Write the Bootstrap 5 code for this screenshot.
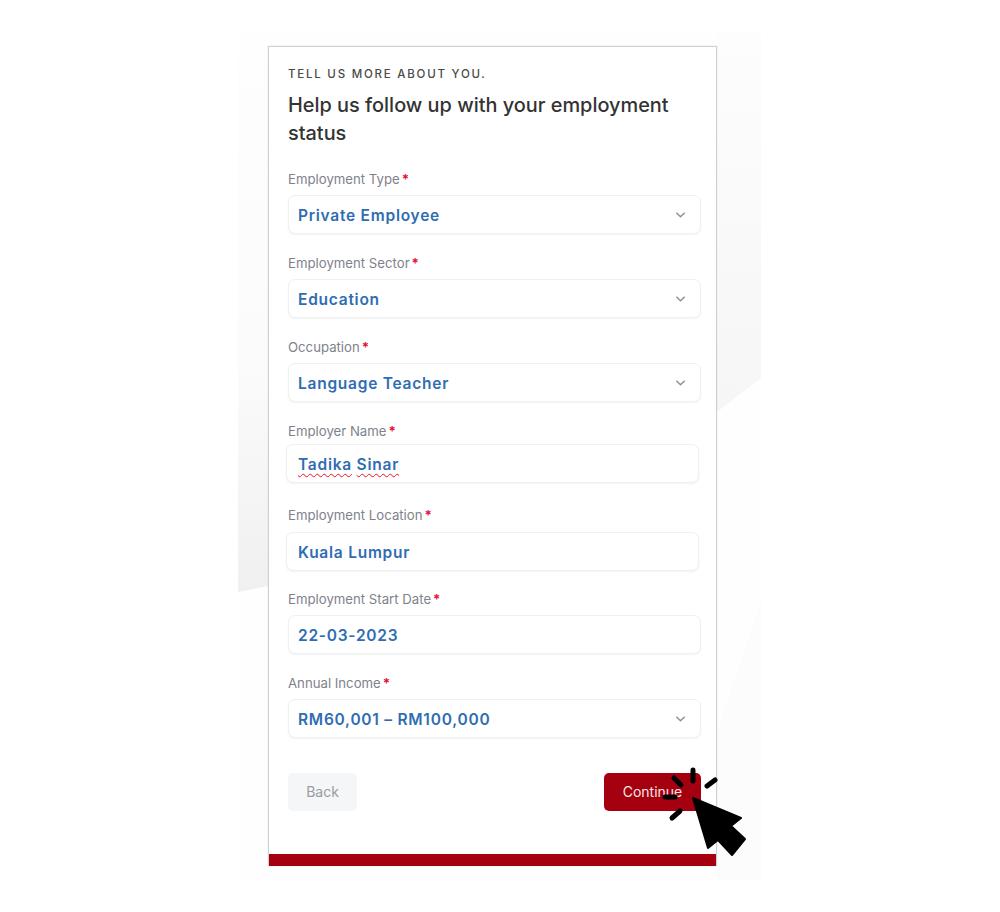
<!DOCTYPE html>
<html lang="en">
<head>
    <meta charset="UTF-8">
    <meta name="viewport" content="width=device-width, initial-scale=1.0">
    <title>Employment status</title>
    <link href="https://cdn.jsdelivr.net/npm/bootstrap@5.3.0/dist/css/bootstrap.min.css" rel="stylesheet">
    <style>
        body {
            background-color: #fff;
            font-family: "Inter", "Liberation Sans", sans-serif;
        }
        .stage {
            position: relative;
            width: 523px;
            height: 848px;
            margin: 32px 0 0 238px;
            padding: 14px 0 0 30px;
            background-color: #fefefe;
        }
        .stage-shapes {
            position: absolute;
            top: 0;
            left: 0;
        }
        .apply-card {
            position: relative;
            width: 449px;
            height: 820px;
            padding: 19px 15px 0 19px;
            background-color: #fff;
            border: 1px solid #cfd0d2;
            border-bottom: 0;
            box-shadow: 0 0 1px rgba(0, 0, 0, .2);
        }
        .apply-eyebrow {
            margin-bottom: 9px;
            font-size: 11.5px;
            font-weight: 500;
            letter-spacing: 1.77px;
            line-height: 16px;
            color: #4a4a4a;
        }
        .apply-title {
            margin-bottom: 25px;
            font-size: 19.9px;
            font-weight: 500;
            line-height: 28px;
            color: #333;
        }
        .field {
            height: 84px;
        }
        .field-label {
            display: block;
            margin-bottom: 8px;
            font-size: 13.2px;
            line-height: 15px;
            color: #80828b;
        }
        .field-label b {
            margin-left: 2px;
            color: #e8103a;
        }
        .field-box.form-control,
        .field-box.form-select {
            height: 39px;
            padding: 1px 9px 0;
            font-size: 15.5px;
            font-weight: 600;
            letter-spacing: .75px;
            line-height: 37px;
            color: #2f6db3;
            background-color: #fff;
            border: 1px solid #eef0f2;
            border-radius: 7px;
            box-shadow: 0 1px 2px rgba(0, 0, 0, .05);
        }
        .field-box.form-select {
            background-image: url("data:image/svg+xml,%3csvg xmlns='http://www.w3.org/2000/svg' viewBox='0 0 12 8'%3e%3cpath fill='none' stroke='%238b9098' stroke-width='1.5' d='M1.5 1.5 6 6l4.5-4.5'/%3e%3c/svg%3e");
            background-position: right 14px center;
            background-size: 11px 8px;
        }
        .field-box.field-shift {
            margin-left: -2px;
            padding-left: 11px;
        }
        .field-tight .field-label {
            margin-bottom: 5px;
        }
        .field-loose .field-label {
            margin-bottom: 9px;
        }
        .misspelt {
            text-decoration: underline wavy #f0102a 1px;
            text-underline-offset: 3px;
        }
        .apply-actions {
            margin-top: 13px;
        }
        .btn-back,
        .btn-continue {
            height: 38px;
            font-size: 14px;
            line-height: 1;
            border: 0;
            border-radius: 5px;
        }
        .btn-back {
            width: 69px;
            color: #9a9ca3;
            background-color: #f5f6f8;
        }
        .btn-continue {
            width: 97px;
            color: #f6e6e6;
            background-color: #a50010;
        }
        .btn-continue:hover {
            color: #fff;
            background-color: #8a000d;
        }
        .apply-footer {
            position: absolute;
            left: 0;
            right: 0;
            bottom: 0;
            height: 12px;
            background-color: #a50010;
        }
        .click-cursor {
            position: absolute;
            top: 733px;
            left: 422px;
        }
    </style>
</head>
<body>
    <div class="stage">
        <!-- faint shapes behind the card -->
        <svg class="stage-shapes" width="523" height="848" viewBox="0 0 523 848">
            <defs>
                <linearGradient id="shadeLeft" x1="0" y1="0" x2="0" y2="1">
                    <stop offset="0" stop-color="#fefefe"/>
                    <stop offset=".6" stop-color="#fbfbfb"/>
                    <stop offset="1" stop-color="#f0f0f1"/>
                </linearGradient>
                <linearGradient id="shadeRight" x1="0" y1="0" x2="0" y2="1">
                    <stop offset="0" stop-color="#fdfdfd"/>
                    <stop offset="1" stop-color="#f6f6f7"/>
                </linearGradient>
            </defs>
            <polygon points="0,0 30,0 30,554 0,560" fill="url(#shadeLeft)"/>
            <polygon points="479,0 523,0 523,346 479,380" fill="url(#shadeRight)"/>
            <polygon points="523,570 479,700 479,848 523,848" fill="#fcfcfc"/>
        </svg>

        <div class="apply-card">
            <p class="apply-eyebrow">TELL US MORE ABOUT YOU.</p>
            <h1 class="apply-title">Help us follow up with your employment status</h1>

            <form>
                <div class="field">
                    <label class="field-label">Employment Type<b>*</b></label>
                    <select class="form-select field-box"><option>Private Employee</option></select>
                </div>
                <div class="field">
                    <label class="field-label">Employment Sector<b>*</b></label>
                    <select class="form-select field-box"><option>Education</option></select>
                </div>
                <div class="field">
                    <label class="field-label">Occupation<b>*</b></label>
                    <select class="form-select field-box"><option>Language Teacher</option></select>
                </div>
                <div class="field field-tight">
                    <label class="field-label">Employer Name<b>*</b></label>
                    <div class="form-control field-box field-shift"><span class="misspelt">Tadika</span> <span class="misspelt">Sinar</span></div>
                </div>
                <div class="field field-loose">
                    <label class="field-label">Employment Location<b>*</b></label>
                    <input class="form-control field-box field-shift" type="text" value="Kuala Lumpur">
                </div>
                <div class="field">
                    <label class="field-label">Employment Start Date<b>*</b></label>
                    <input class="form-control field-box" type="text" value="22-03-2023">
                </div>
                <div class="field">
                    <label class="field-label">Annual Income<b>*</b></label>
                    <select class="form-select field-box"><option>RM60,001 – RM100,000</option></select>
                </div>
                <div class="apply-actions d-flex justify-content-between">
                    <button type="button" class="btn btn-back">Back</button>
                    <button type="button" class="btn btn-continue">Continue</button>
                </div>
            </form>
            <div class="apply-footer"></div>
        </div>

        <!-- click pointer over the button -->
        <svg class="click-cursor" width="90" height="95" viewBox="660 765 90 95">
            <g stroke="#000" stroke-width="5" stroke-linecap="round">
                <path d="M693 770v11M674 778l7 7M665 797h10M672 818l8-7M707 786l8-6"/>
            </g>
            <path d="M693 798 741 818 731 826 745 839 732 855 718 840 708 848Z" fill="#000" stroke="#000" stroke-width="2" stroke-linejoin="round"/>
        </svg>
    </div>

    <script src="https://cdn.jsdelivr.net/npm/bootstrap@5.3.0/dist/js/bootstrap.bundle.min.js"></script>
</body>
</html>
